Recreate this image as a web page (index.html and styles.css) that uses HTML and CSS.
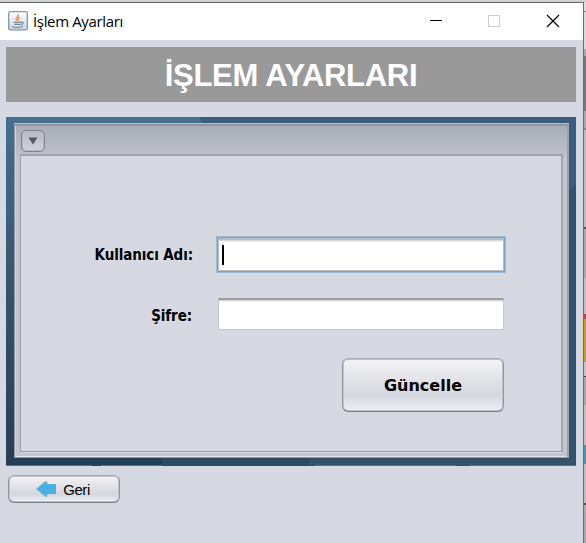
FILE: index.html
```html
<!DOCTYPE html>
<html lang="tr">
<head>
<meta charset="utf-8">
<title>İşlem Ayarları</title>
<link rel="stylesheet" href="styles.css">
</head>
<body>
<div class="screen">
  <main class="window">
    <header class="titlebar">
      <svg class="java" width="20" height="20" viewBox="0 0 20 20">
        <defs><linearGradient id="tile" x2="0" y2="1"><stop stop-color="#fff"/><stop offset="1" stop-color="#cbd7e1"/></linearGradient></defs>
        <rect x=".7" y=".7" width="18.6" height="18.2" rx="1.5" fill="url(#tile)" stroke="#8298ab" stroke-width="1.3"/>
        <path d="M9 10C5 7 12 6 9.500 3.500c3.500 2.500-2 3.500 0 6M10.500 10c-1-2 1-2.500 2-3" fill="none" stroke="#e7985a" stroke-width="1.200"/>
        <path d="M5.500 11.300h7.500M6.500 13.300h6M13 11c3-.5 2.500 2 0 2.500M4 15.500c3 1.500 8 1.300 11-.5" fill="none" stroke="#6d8a9e" stroke-width="1.200"/>
      </svg>
      <span class="title">İşlem Ayarları</span>
      <svg class="controls" width="130" height="14" viewBox="0 0 130 14" fill="none" shape-rendering="crispEdges">
        <path d="M0 6.500h12" stroke="#000"/>
        <path d="M58.500 1.500h11v11h-11z" stroke="#ccc"/>
        <path d="M117 1l12 12M129 1l-12 12" stroke="#000" stroke-width="1.200" shape-rendering="auto"/>
      </svg>
    </header>
    <section class="content">
      <h1 class="banner">İŞLEM AYARLARI</h1>
      <div class="desktop">
        <svg class="wallpaper" width="570" height="349" viewBox="0 0 570 349" preserveAspectRatio="none">
          <defs>
            <linearGradient id="left" x2="0" y2="1"><stop stop-color="#466f90"/><stop offset=".5" stop-color="#35536d"/><stop offset="1" stop-color="#243f56"/></linearGradient>
          </defs>
          <path d="M0 0h570v349H0z" fill="#32536e"/>
          <path d="M0 0h194l3 8H8v341H0z" fill="url(#left)"/>
          <path d="M194 0h376v69l-8 6V8H197z" fill="#385d7e"/>
          <path d="M0 341h156v8H0z" fill="#243f56"/>
          <path d="M156 341h149l-3 8H156z" fill="#2b4960"/>
          <path d="M305 341h265v8H302z" fill="#345369"/>
          <path d="M0 348.500h86m9 0h61M309 348.500h141m13 0h107" stroke="#53718a"/>
        </svg>
        <div class="frame">
          <div class="frame-bar">
            <button class="menu" aria-label="Menü"><svg width="10" height="8" viewBox="0 0 10 8"><path d="M.5.500h9L5 7.500z" fill="#55585f"/></svg></button>
          </div>
          <form class="form">
            <label class="label" for="user">Kullanıcı Adı:</label>
            <div class="field focused" id="user"><span class="caret"></span></div>
            <label class="label password" for="pass">Şifre:</label>
            <div class="field second" id="pass"></div>
            <button class="button update" type="button"><span>Güncelle</span></button>
          </form>
        </div>
      </div>
      <button class="button back" type="button">
        <svg width="21" height="16" viewBox="0 0 21 16"><path d="M.5 8L9 .8h2V3h9v10h-9v2.200H9z" fill="#48b0e3"/><path d="M.5 8L9 .8h2V3M.5 8L9 15.200h2V13" fill="none" stroke="#86b6d0"/></svg>
        <span>Geri</span>
      </button>
    </section>
  </main>
  <aside class="behind"></aside>
</div>
</body>
</html>
```
FILE: styles.css
```css
* { box-sizing: border-box; }
body { margin: 0; overflow: hidden; }
button { font: inherit; padding: 0; color: #000; }
.screen {
  display: flex;
  width: 586px;
  height: 543px;
  padding-top: 2px;
  background: linear-gradient(#d8d8d8, #c8c8c8 2px, transparent 2px);
}
.window {
  width: 584px;
  height: 541px;
  background: #d6d9e1;
  border-top: 1px solid #686868;
  border-right: 1px solid #686b70;
}
.titlebar {
  display: flex;
  align-items: center;
  height: 37px;
  padding: 0 24px 0 8px;
  background: #fff;
}
.java { margin-top: -2px; }
.title {
  margin: -1px 0 0 5px;
  font: 15px "Open Sans", sans-serif;
  letter-spacing: -.35px;
}
.controls { margin: -1px -1px 0 auto; }
.content { padding: 7px 7px 0 6px; }
.banner {
  height: 55px;
  margin: 0 0 15px;
  background: #999;
  color: #fff;
  font: bold 31px/57px "Liberation Sans", sans-serif;
  letter-spacing: -.3px;
  text-align: center;
}
.desktop {
  display: grid;
  height: 349px;
}
.wallpaper, .frame { grid-area: 1 / 1; }
.frame {
  margin: 7px 7px 8px 8px;
  padding: 0 4px 5px 5px;
  background: linear-gradient(#a9adb5, #bfc2cb 30px, #c3c6ce 32px);
  border: 1px solid #9498a1;
  border-top: 2px solid #91959d;
  border-right: 2px solid #9da1aa;
  box-shadow: inset 1px 0 #d1d3d9, inset 0 -1px #e2e4e8, 0 -1px #b9bdc5;
}
.frame-bar {
  display: flex;
  height: 28px;
  padding: 4px 0 0 1px;
}
.menu {
  display: flex;
  align-items: center;
  justify-content: center;
  width: 24px;
  height: 22px;
  border: 1px solid #7d818a;
  border-radius: 5px;
  background: linear-gradient(#b7bac2, #d0d2d8);
  box-shadow: inset 0 0 0 1px #b7bac1;
}
.form {
  display: grid;
  grid-template-columns: 172px 290px;
  grid-template-rows: 36px 35px 53px;
  column-gap: 23px;
  row-gap: 25px;
  height: 298px;
  padding-top: 81px;
  background: #d6d9e1;
  border: 1px solid #9a9ea7;
  border-top: 2px solid #9fa3ac;
  border-right: 2px solid #a1a5ae;
  box-shadow: 0 1px #d5d7dc;
}
.label {
  justify-self: end;
  align-self: center;
  font: bold 15px "DejaVu Sans Condensed", "DejaVu Sans", sans-serif;
  font-stretch: condensed;
  letter-spacing: -.1px;
  white-space: nowrap;
}
.password { margin-right: 1px; }
.field {
  width: 286px;
  height: 32px;
  margin: 1px 2px;
  background: #fff;
  border: 1px solid #c6c7ca;
  border-top: 2px solid #9d9ea2;
  box-shadow: inset 0 1px #d8d8d8, inset 0 2px #f2f2f2;
}
.second { margin-top: 0; }
.focused {
  height: 33px;
  border-color: #b9bcc1;
  box-shadow: inset 0 1px #d8d8d8, inset 0 2px #f2f2f2, 0 0 0 1px #73a4d1, 0 0 0 2px #9bbbd9;
  padding: 5px 0 0 3px;
}
.caret { display: block; width: 2px; height: 20px; background: #000; }
.button {
  display: flex;
  align-items: center;
  justify-content: center;
  border: 1px solid #9c9fa4;
  border-color: #a7aab0 #94979c #7b7e83;
  border-radius: 6px;
  background: linear-gradient(#f4f4f6, #e2e3e7 40%, #d4d7de 70%, #edf0f7);
  box-shadow: inset 0 0 0 1px #c0c2c7, inset 0 -1px #999ca1;
}
.update {
  grid-column: 2;
  width: 162px;
  height: 54px;
  margin-left: 126px;
  font: bold 16px "DejaVu Sans", sans-serif;
  letter-spacing: 0;
}
.update span { padding-top: 1px; }
.back {
  width: 112px;
  height: 28px;
  margin: 9px 0 0 2px;
  gap: 6px;
  padding-right: 2px;
  font: 15px "Liberation Sans", sans-serif;
  letter-spacing: -.4px;
}
.behind {
  width: 2px;
  background: linear-gradient(#ddd 9px, #888 9px 10px, #d8dade 10px 47px, #a6a8ad 47px 54px, #777 54px 109px, #aaa 109px 126px, #888 126px 128px, #bcbcbc 128px 225px, #555 225px 227px, #a9aaac 227px 276px, #c0bfbf 276px 312px, #cf3f43 312px 317px, #c69f1d 317px 360px, #c5c4c4 360px 374px, #444 374px 375px, #a6a7a8 375px 403px, #c0bfbd 403px 443px, #4596bd 443px 462px, #bfbebc 462px 501px, #555 501px 503px, #a9aaac 503px);
}
```
